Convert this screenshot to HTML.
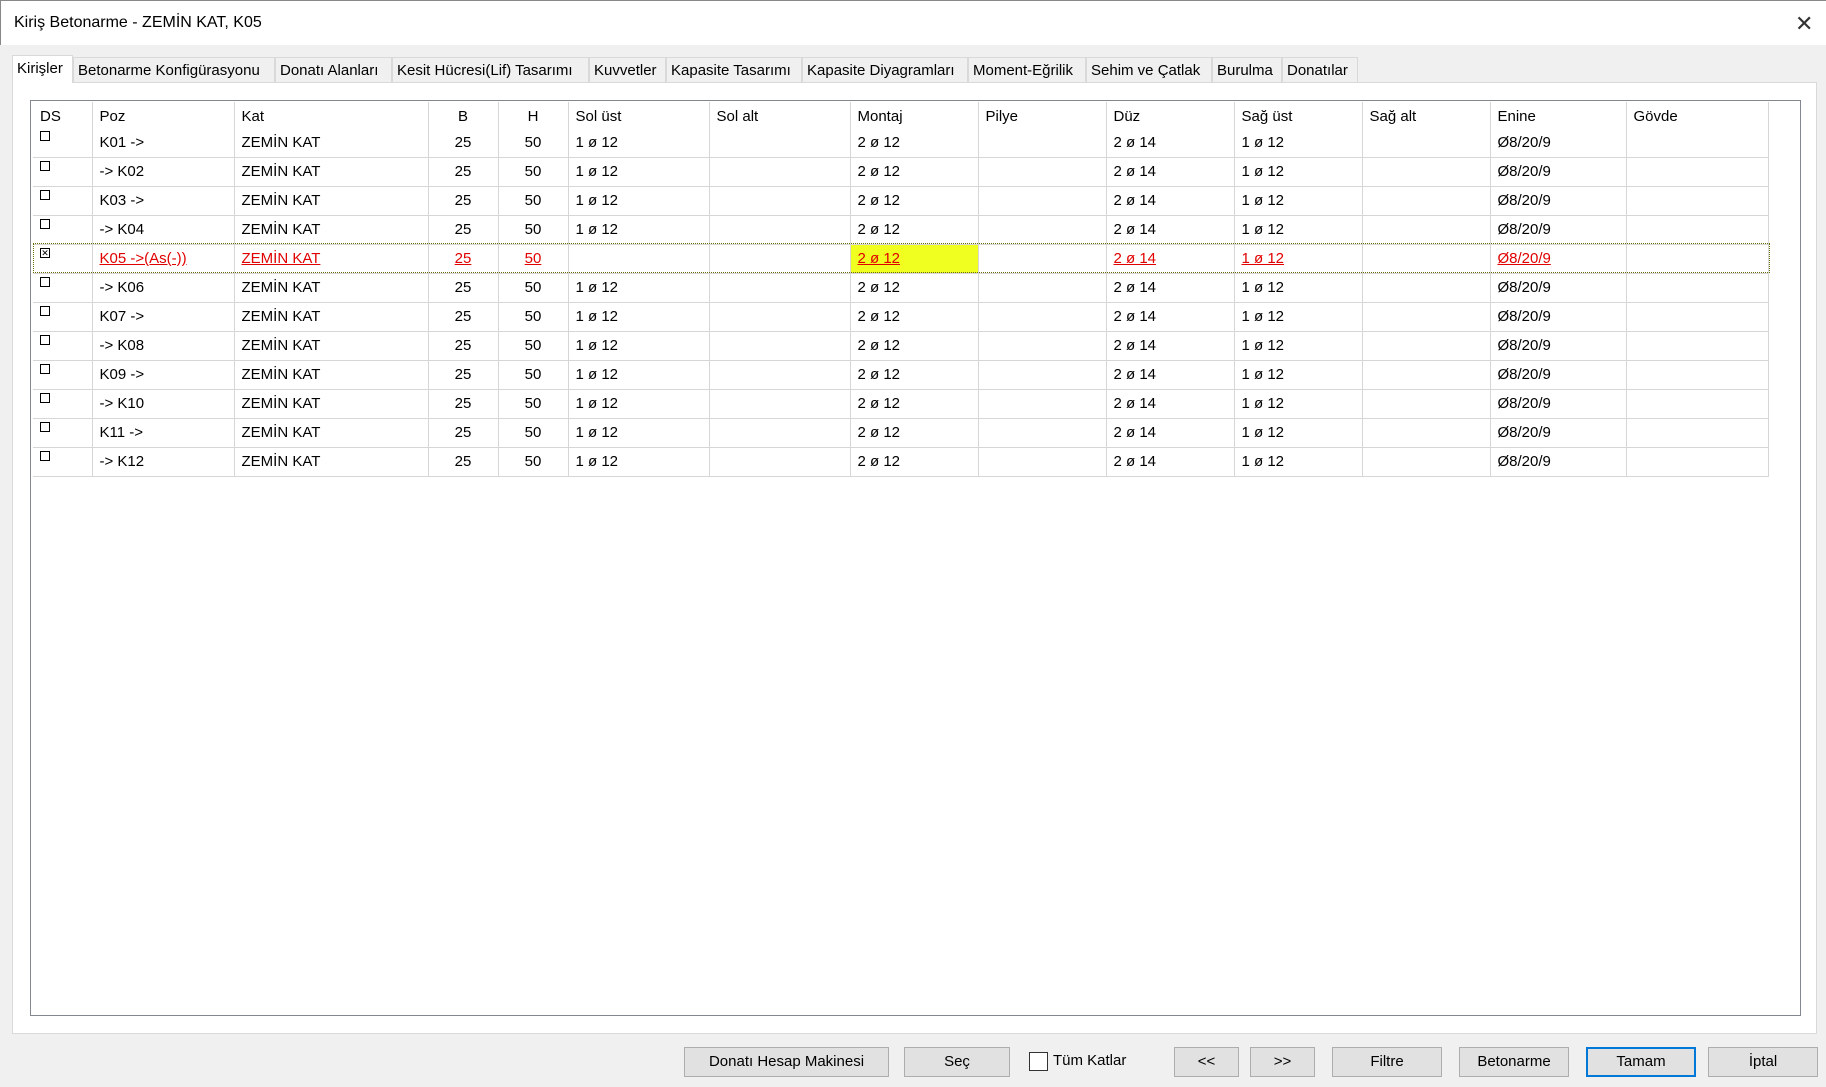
<!DOCTYPE html>
<html><head><meta charset="utf-8"><style>
*{margin:0;padding:0;box-sizing:border-box}
body{width:1826px;height:1087px;background:#f0f0f0;font-family:"Liberation Sans",sans-serif;font-size:15px;color:#000;position:relative;overflow:hidden}
.title{position:absolute;left:0;top:0;width:1826px;height:45px;background:#fff;border-left:1px solid #888;border-top:1px solid #888}
.title span{position:absolute;left:13px;top:13px;font-size:16px}
.x{position:absolute;left:1794px;top:10px;font-size:22px;color:#333}
.tab{position:absolute;top:57px;height:25px;border:1px solid #d9d9d9;border-bottom:none;background:#f0f0f0;font-size:15px;padding:4px 0 0 4px;white-space:nowrap;overflow:hidden}
.tab.act{background:#fff;top:55px;height:28px}
.panel{position:absolute;left:12px;top:82px;width:1805px;height:952px;background:#fff;border:1px solid #d9d9d9}
.grid{position:absolute;left:30px;top:100px;width:1771px;height:916px;background:#fff;border:1px solid #828790}
table{position:absolute;left:2px;top:1px;border-collapse:collapse;table-layout:fixed}
td{height:29px;border-right:1px solid #d6d6d6;border-bottom:1px solid #d6d6d6;padding:0 0 0 7px;vertical-align:middle;white-space:nowrap;position:relative}
tr.h td{height:26px;border-bottom:none;padding-top:2px}
td.c{text-align:center;padding:0}
.cb{position:absolute;left:7px;top:3px;width:10px;height:10px;border:1px solid #000;font-size:9px;line-height:8px;text-align:center}
tr.sel td{color:#e00000;text-decoration:underline;background:#fff}
tr.sel td.y{background:#f0ff20}
.btn{position:absolute;top:1047px;height:30px;background:#e1e1e1;border:1px solid #adadad;text-align:center;line-height:28px;font-size:15px}
</style></head><body>
<div class="title"><span>Kiriş Betonarme - ZEMİN KAT, K05</span><div class="x">✕</div></div>
<div class="panel"></div>
<div class="tab act" style="left:12px;width:61px">Kirişler</div>
<div class="tab" style="left:73px;width:202px">Betonarme Konfigürasyonu</div>
<div class="tab" style="left:275px;width:117px">Donatı Alanları</div>
<div class="tab" style="left:392px;width:197px">Kesit Hücresi(Lif) Tasarımı</div>
<div class="tab" style="left:589px;width:77px">Kuvvetler</div>
<div class="tab" style="left:666px;width:136px">Kapasite Tasarımı</div>
<div class="tab" style="left:802px;width:166px">Kapasite Diyagramları</div>
<div class="tab" style="left:968px;width:118px">Moment-Eğrilik</div>
<div class="tab" style="left:1086px;width:126px">Sehim ve Çatlak</div>
<div class="tab" style="left:1212px;width:70px">Burulma</div>
<div class="tab" style="left:1282px;width:76px">Donatılar</div>
<div class="grid"><table>
<colgroup><col style="width:59px"><col style="width:142px"><col style="width:194px"><col style="width:70px"><col style="width:70px"><col style="width:141px"><col style="width:141px"><col style="width:128px"><col style="width:128px"><col style="width:128px"><col style="width:128px"><col style="width:128px"><col style="width:136px"><col style="width:142px"></colgroup>
<tr class="h"><td>DS</td><td>Poz</td><td>Kat</td><td class="c">B</td><td class="c">H</td><td>Sol üst</td><td>Sol alt</td><td>Montaj</td><td>Pilye</td><td>Düz</td><td>Sağ üst</td><td>Sağ alt</td><td>Enine</td><td>Gövde</td></tr>
<tr><td><div class="cb"></div></td><td>K01 -&gt;</td><td>ZEMİN KAT</td><td class="c">25</td><td class="c">50</td><td>1 ø 12</td><td></td><td>2 ø 12</td><td></td><td>2 ø 14</td><td>1 ø 12</td><td></td><td>Ø8/20/9</td><td></td></tr>
<tr><td><div class="cb"></div></td><td>-&gt; K02</td><td>ZEMİN KAT</td><td class="c">25</td><td class="c">50</td><td>1 ø 12</td><td></td><td>2 ø 12</td><td></td><td>2 ø 14</td><td>1 ø 12</td><td></td><td>Ø8/20/9</td><td></td></tr>
<tr><td><div class="cb"></div></td><td>K03 -&gt;</td><td>ZEMİN KAT</td><td class="c">25</td><td class="c">50</td><td>1 ø 12</td><td></td><td>2 ø 12</td><td></td><td>2 ø 14</td><td>1 ø 12</td><td></td><td>Ø8/20/9</td><td></td></tr>
<tr><td><div class="cb"></div></td><td>-&gt; K04</td><td>ZEMİN KAT</td><td class="c">25</td><td class="c">50</td><td>1 ø 12</td><td></td><td>2 ø 12</td><td></td><td>2 ø 14</td><td>1 ø 12</td><td></td><td>Ø8/20/9</td><td></td></tr>
<tr class="sel"><td style="text-decoration:none"><div class="cb" style="color:#000">✕</div></td><td>K05 -&gt;(As(-))</td><td>ZEMİN KAT</td><td class="c">25</td><td class="c">50</td><td></td><td></td><td class="y">2 ø 12</td><td></td><td>2 ø 14</td><td>1 ø 12</td><td></td><td>Ø8/20/9</td><td></td></tr>
<tr><td><div class="cb"></div></td><td>-&gt; K06</td><td>ZEMİN KAT</td><td class="c">25</td><td class="c">50</td><td>1 ø 12</td><td></td><td>2 ø 12</td><td></td><td>2 ø 14</td><td>1 ø 12</td><td></td><td>Ø8/20/9</td><td></td></tr>
<tr><td><div class="cb"></div></td><td>K07 -&gt;</td><td>ZEMİN KAT</td><td class="c">25</td><td class="c">50</td><td>1 ø 12</td><td></td><td>2 ø 12</td><td></td><td>2 ø 14</td><td>1 ø 12</td><td></td><td>Ø8/20/9</td><td></td></tr>
<tr><td><div class="cb"></div></td><td>-&gt; K08</td><td>ZEMİN KAT</td><td class="c">25</td><td class="c">50</td><td>1 ø 12</td><td></td><td>2 ø 12</td><td></td><td>2 ø 14</td><td>1 ø 12</td><td></td><td>Ø8/20/9</td><td></td></tr>
<tr><td><div class="cb"></div></td><td>K09 -&gt;</td><td>ZEMİN KAT</td><td class="c">25</td><td class="c">50</td><td>1 ø 12</td><td></td><td>2 ø 12</td><td></td><td>2 ø 14</td><td>1 ø 12</td><td></td><td>Ø8/20/9</td><td></td></tr>
<tr><td><div class="cb"></div></td><td>-&gt; K10</td><td>ZEMİN KAT</td><td class="c">25</td><td class="c">50</td><td>1 ø 12</td><td></td><td>2 ø 12</td><td></td><td>2 ø 14</td><td>1 ø 12</td><td></td><td>Ø8/20/9</td><td></td></tr>
<tr><td><div class="cb"></div></td><td>K11 -&gt;</td><td>ZEMİN KAT</td><td class="c">25</td><td class="c">50</td><td>1 ø 12</td><td></td><td>2 ø 12</td><td></td><td>2 ø 14</td><td>1 ø 12</td><td></td><td>Ø8/20/9</td><td></td></tr>
<tr><td><div class="cb"></div></td><td>-&gt; K12</td><td>ZEMİN KAT</td><td class="c">25</td><td class="c">50</td><td>1 ø 12</td><td></td><td>2 ø 12</td><td></td><td>2 ø 14</td><td>1 ø 12</td><td></td><td>Ø8/20/9</td><td></td></tr>
</table>
<div style="position:absolute;left:2px;top:142px;width:1737px;height:30px;border:1px dotted #6b6b00;pointer-events:none"></div>
</div>
<div class="btn" style="left:684px;width:205px">Donatı Hesap Makinesi</div>
<div class="btn" style="left:904px;width:106px">Seç</div>
<div style="position:absolute;left:1029px;top:1052px;width:19px;height:19px;border:1px solid #333;background:#fff"></div>
<div style="position:absolute;left:1053px;top:1052px;font-size:15px">Tüm Katlar</div>
<div class="btn" style="left:1174px;width:65px">&lt;&lt;</div>
<div class="btn" style="left:1250px;width:65px">&gt;&gt;</div>
<div class="btn" style="left:1332px;width:110px">Filtre</div>
<div class="btn" style="left:1459px;width:110px">Betonarme</div>
<div class="btn" style="left:1586px;width:110px;border:2px solid #0078d7;line-height:26px">Tamam</div>
<div class="btn" style="left:1708px;width:110px">İptal</div>
</body></html>
